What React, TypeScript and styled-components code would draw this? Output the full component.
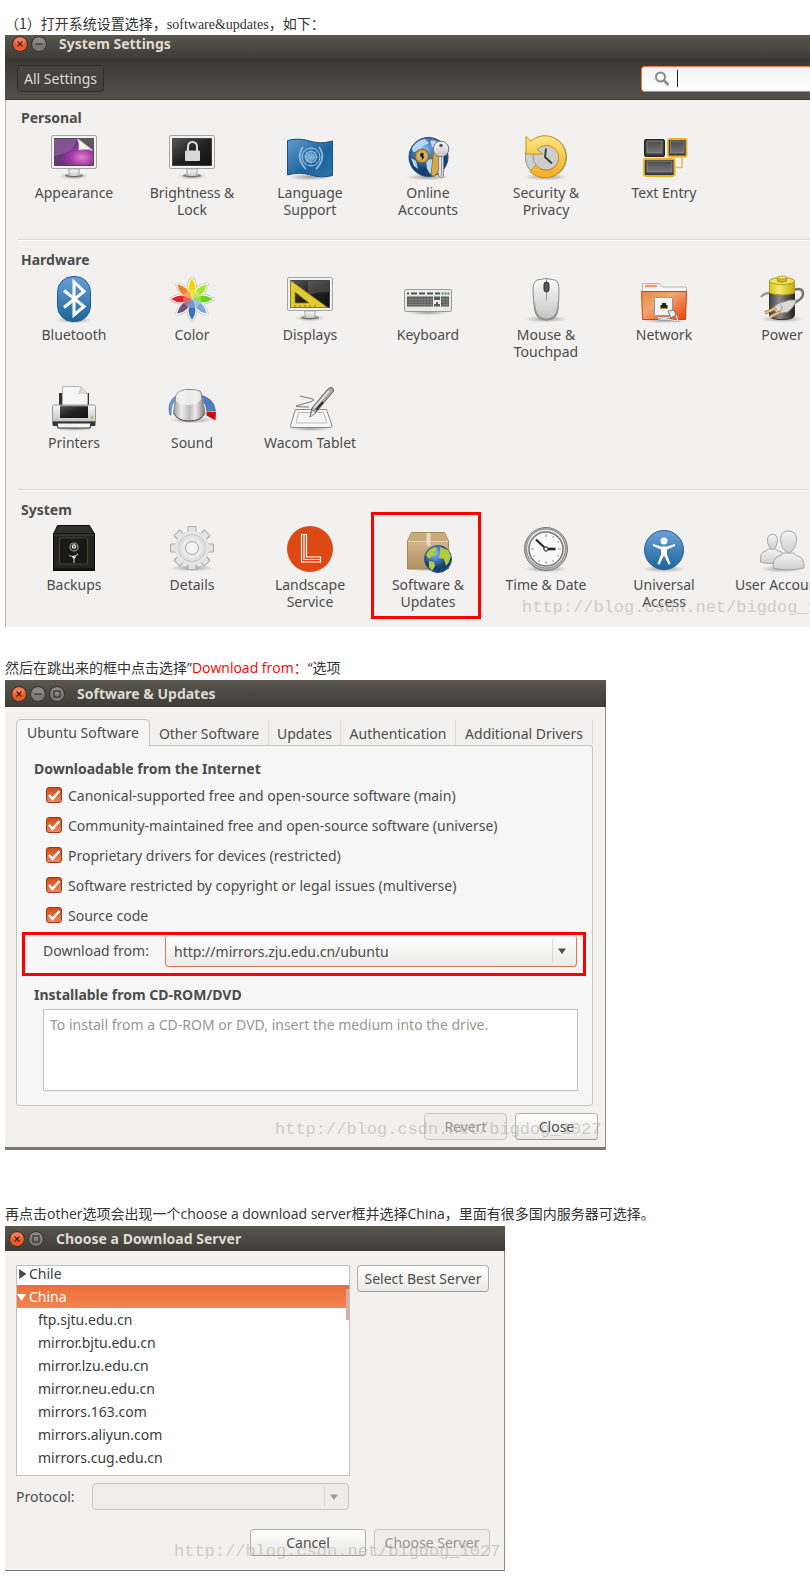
import React from "react";
import styled, { createGlobalStyle, css } from "styled-components";

const ui = `"Noto Sans", "Noto Sans CJK SC", sans-serif`;

const GlobalStyle = createGlobalStyle`
  * { box-sizing: border-box; }
  body { margin: 0; background: #fff; color: #333; overflow-x: hidden; }
  button, input, select, textarea { font: inherit; color: inherit; margin: 0; }
`;

/* ---------- article ---------- */

const Article = styled.main`
  padding: 12px 0 16px 5px;
  font-family: ${ui};
  font-size: 14px;
  line-height: 23px;
  overflow: hidden;
`;

const Paragraph = styled.p<{ $space?: number }>`
  height: 23px;
  margin: ${(p) => p.$space ?? 0}px 0 0;
  font-family: "Open Sans", "Noto Sans CJK SC", sans-serif;
  line-height: 22px;
  white-space: nowrap;
`;

const Fullwidth = styled.span`
  font-family: "Noto Sans CJK SC", sans-serif;
`;

const Serif = styled.span`
  font-family: "Liberation Serif", serif;
`;

const Red = styled.span`
  color: #f00;
`;

const Figure = styled.figure<{ $max?: number }>`
  position: relative;
  margin: 0;
  width: 100%;
  max-width: ${(p) => (p.$max ? `${p.$max}px` : "none")};
  color: #4c4c4c;
  font-size: 14px;
  line-height: 17px;
  background: #f2f1f0;
`;

const Watermark = styled.span<{ $left: number; $bottom: number }>`
  position: absolute;
  left: ${(p) => p.$left}px;
  bottom: ${(p) => p.$bottom}px;
  font-family: "Liberation Mono", monospace;
  font-size: 17px;
  line-height: 20px;
  color: rgba(170, 165, 155, 0.5);
  white-space: nowrap;
  pointer-events: none;
`;

/* ---------- window chrome ---------- */

const TitleBar = styled.header<{ $height: number; $pad: number; $bottom?: number }>`
  display: flex;
  align-items: center;
  height: ${(p) => p.$height}px;
  padding: 0 ${(p) => p.$pad}px ${(p) => p.$bottom ?? 0}px;
  background: linear-gradient(#59574e, #3d3c37);
`;

const Controls = styled.div`
  display: flex;
  gap: 3px;
`;

const Control = styled.button`
  width: 16px;
  height: 16px;
  padding: 0;
  border: 0;
  background: none;
  line-height: 0;
`;

const WindowTitle = styled.h2`
  margin: 0 0 0 12px;
  font-size: 14px;
  line-height: 17px;
  font-weight: 700;
  color: #dfdbd2;
  white-space: nowrap;
`;

type ControlKind = "close" | "minimize" | "maximize";

function WindowControl({ kind }: { kind: ControlKind }) {
  const close = kind === "close";
  return (
    <Control type="button" aria-label={kind}>
      <svg width="16" height="16" viewBox="0 0 16 16">
        <circle cx="8" cy="8" r="7.5" fill={close ? "#ef5a29" : "#7b7a74"} stroke="#33322d" />
        <ellipse cx="8" cy="5" rx="5.5" ry="3.5" fill="#fff" opacity={close ? 0.22 : 0.12} />
        {kind === "close" && <path d="M5.5 5.5l5 5M10.5 5.5l-5 5" stroke="#4a1c0c" strokeWidth="1.3" />}
        {kind === "minimize" && <path d="M4.5 8h7" stroke="#33322d" strokeWidth="1.3" />}
        {kind === "maximize" && <rect x="5" y="5" width="6" height="6" fill="none" stroke="#33322d" strokeWidth="1.2" />}
      </svg>
    </Control>
  );
}

const buttonLook = css`
  border: 1px solid #b3b1ad;
  border-bottom-color: #9c9a96;
  border-radius: 4px;
  background: linear-gradient(#fefefe, #ebeae9);
`;

const PushButton = styled.button<{ $width: number }>`
  ${buttonLook}
  width: ${(p) => p.$width}px;
  height: 27px;
  padding: 0;
  line-height: 17px;
  white-space: nowrap;
  &:disabled {
    color: #98968f;
    background: #eeedec;
    border-color: #c6c5c2;
  }
`;

/* ---------- system settings ---------- */

const SettingsToolbar = styled.div`
  display: flex;
  justify-content: space-between;
  align-items: center;
  height: 42px;
  padding-left: 12px;
  background: linear-gradient(#393732, #53514a);
  border-bottom: 1px solid #3a3934;
`;

const AllSettings = styled.button`
  height: 27px;
  padding: 0 6px;
  border: 1px solid #2f2e2a;
  border-radius: 4px;
  background: #45433d;
  color: #dfdbd2;
  line-height: 17px;
`;

const SearchBox = styled.label`
  display: flex;
  align-items: center;
  width: 169px;
  height: 26px;
  padding-left: 12px;
  border: 1px solid #f07746;
  border-right: 0;
  border-radius: 4px 0 0 4px;
  background: linear-gradient(#f4f4f4, #fff);
`;

const Caret = styled.span`
  width: 1px;
  height: 17px;
  margin-left: 7px;
  background: #222;
`;

const SearchInput = styled.input`
  flex: 1;
  min-width: 0;
  border: 0;
  outline: 0;
  background: none;
`;

const SettingsBody = styled.div`
  border-left: 1px solid #b4b2af;
  padding-left: 9px;
  overflow: hidden;
`;

const Section = styled.section`
  padding: 9px 0 20px;
  & + & {
    padding-top: 12px;
    background: linear-gradient(#dbdad8 0 1px, #fbfbfa 1px 2px, transparent 2px) no-repeat 3px 0;
  }
  &:last-child {
    padding-bottom: 16px;
  }
`;

const SectionTitle = styled.h3`
  margin: 0 0 7px 6px;
  font-size: 14px;
  line-height: 17px;
  font-weight: 700;
`;

const TileGrid = styled.div`
  display: grid;
  grid-template-columns: repeat(7, 118px);
  row-gap: 22px;
`;

const Tile = styled.button`
  position: relative;
  display: flex;
  flex-direction: column;
  align-items: center;
  gap: 3px;
  height: 86px;
  padding: 0;
  border: 0;
  background: none;
  line-height: 17px;
  white-space: pre;
`;

const TileHighlight = styled.span`
  position: absolute;
  inset: -13px 6px -8px 2px;
  border: 3px solid #f00;
`;

/* ---------- drawings ---------- */

const Defs = () => (
  <svg width="0" height="0" style={{ position: "absolute" }} aria-hidden="true">
    <defs>
      <linearGradient id="blue" x2="0" y2="1"><stop stopColor="#6a9fd8" /><stop offset="1" stopColor="#1c6796" /></linearGradient>
      <linearGradient id="flag" x2="1" y2="1"><stop stopColor="#629bd3" /><stop offset=".6" stopColor="#1d629a" /><stop offset="1" stopColor="#2c75ad" /></linearGradient>
      <radialGradient id="purple" cx=".7" cy=".7"><stop stopColor="#dc7fc9" /><stop offset=".6" stopColor="#a03aa5" /><stop offset="1" stopColor="#6d3580" /></radialGradient>
      <linearGradient id="black" x2="1" y2="1"><stop stopColor="#555" /><stop offset=".5" stopColor="#222" /><stop offset="1" stopColor="#111" /></linearGradient>
      <linearGradient id="silver" x2="0" y2="1"><stop stopColor="#fafafa" /><stop offset="1" stopColor="#c4c4c4" /></linearGradient>
      <linearGradient id="pale" x2="0" y2="1"><stop stopColor="#f4f4f4" /><stop offset="1" stopColor="#cfcfcf" /></linearGradient>
      <linearGradient id="steel" x2="1" y2="0"><stop stopColor="#999" /><stop offset=".25" stopColor="#eee" /><stop offset=".5" stopColor="#bbb" /><stop offset=".7" stopColor="#f2e6f2" /><stop offset="1" stopColor="#777" /></linearGradient>
      <linearGradient id="gold" x2="0" y2="1"><stop stopColor="#fbe583" /><stop offset="1" stopColor="#f2ae22" /></linearGradient>
      <linearGradient id="orange" x2="1" y2="1"><stop stopColor="#e58a3c" /><stop offset=".4" stopColor="#f2a472" /><stop offset="1" stopColor="#e8440b" /></linearGradient>
      <linearGradient id="key" x2="0" y2="1"><stop stopColor="#4c4c4c" /><stop offset="1" stopColor="#757575" /></linearGradient>
      <linearGradient id="tan" x2="0" y2="1"><stop stopColor="#dcc097" /><stop offset="1" stopColor="#b0905f" /></linearGradient>
      <linearGradient id="yellow" x2="1" y2="0"><stop stopColor="#d8c520" /><stop offset=".4" stopColor="#f4e96c" /><stop offset="1" stopColor="#bfa914" /></linearGradient>
      <linearGradient id="cell" x2="1" y2="0"><stop stopColor="#444" /><stop offset=".4" stopColor="#8a8a8a" /><stop offset="1" stopColor="#222" /></linearGradient>
      <radialGradient id="globe" cx=".4" cy=".3"><stop stopColor="#8ab8e6" /><stop offset=".6" stopColor="#3a72b5" /><stop offset="1" stopColor="#164071" /></radialGradient>
      <radialGradient id="shade"><stop stopOpacity=".35" /><stop offset="1" stopOpacity="0" /></radialGradient>
    </defs>
  </svg>
);

const Shadow = ({ y = 44, rx = 22 }: { y?: number; rx?: number }) => (
  <ellipse cx="24" cy={y} rx={rx} ry="3.5" fill="url(#shade)" />
);

const Monitor = ({ children, screen }: { children: React.ReactNode; screen: string }) => (
  <>
    <Shadow y={43} rx={15} />
    <path d="M18.500 36h11l-1 5 4 1.500q1 1.500-8.500 1.500t-8.500-1.500l4-1.500z" fill="url(#silver)" stroke="#888" strokeWidth=".7" />
    <path d="M15.500 42.500q8.500 2.500 17 0" fill="none" stroke="#666" />
    <rect x="1.500" y="2.500" width="45" height="33" rx="1.500" fill="#f1f1f1" stroke="#a5a5a5" />
    <rect x="4.500" y="5.500" width="39" height="27" fill={screen} stroke="#111" strokeOpacity=".6" />
    {children}
  </>
);

const petals = ["#f5d500", "#a8e62a", "#6fcf1f", "#7ba7dc", "#3c6fb5", "#75507b", "#e8242c", "#f58220"];
const gearTeeth = [0, 45, 90, 135, 180, 225, 270, 315];

const icons: Record<string, React.ReactNode> = {
  appearance: (
    <Monitor screen="url(#purple)">
      <path d="M4 6h23q-3 14-23 17z" fill="#fff" opacity=".15" />
      <path d="M28 5h16v12z" fill="#5a5a5a" />
      <path d="M27.500 5.500q2 5 1.500 11.500 8-1.500 14 .5z" fill="#f2f2f2" stroke="#ccc" strokeWidth=".5" />
    </Monitor>
  ),
  lock: (
    <Monitor screen="url(#black)">
      <path d="M20 18v-4q0-5 4.500-5t4.500 5v4" fill="none" stroke="#ddd" strokeWidth="2" />
      <rect x="17" y="17.500" width="15" height="10.500" rx="1" fill="#d8d8d8" />
    </Monitor>
  ),
  flag: (
    <>
      <Shadow />
      <path d="M1.500 7.500q11-3 22 .500t23 0v34.500q-11 3-22-.5t-23 0z" fill="url(#flag)" stroke="#155489" />
      <g fill="none" stroke="#a9cdea">
        <circle cx="25" cy="24" r="9" strokeWidth="1" /><circle cx="25" cy="24" r="5.500" strokeWidth="1.500" opacity=".7" />
        <path d="M17 14q-8 11 3 22M33 14q8 11-3 22" strokeWidth="1.800" opacity=".8" />
        <path d="M25 15v18M17 24h16M19 30l12-12M19 18l12 12" strokeWidth=".6" opacity=".6" />
      </g>
      <path d="M20 24q2-5 6-4 5 2 3 6l-4 3q-5 0-5-5z" fill="#9cc5e8" opacity=".6" />
    </>
  ),
  accounts: (
    <>
      <Shadow />
      <circle cx="24.500" cy="24" r="19.500" fill="url(#globe)" stroke="#214d7d" />
      <path d="M8 15q5-8 13-9l4 4-6 3-3 5-7 1zM26 7l8 1 5 6-5 3-6-3zM7 25l5 3 2 8-4-3zM22 27l8-1 2 8-6 7-3-5z" fill="#b6d8ef" />
      <circle cx="18" cy="23" r="7" fill="#c49a45" stroke="#7b5a1d" />
      <circle cx="18" cy="23" r="5" fill="#d8b25c" />
      <path d="M18 19.500l2 1.500-1 2 1.500 1-3 3.500.5-3-1.500-1-.5-2.500z" fill="#141414" />
      <path d="M30 14l-3 28 3 1.500 4-4 3-24z" fill="#d6a944" stroke="#8a6a22" strokeWidth=".8" />
      <path d="M24 9l5-3 8 5" fill="none" stroke="#777" />
      <circle cx="37" cy="16" r="7.800" fill="url(#silver)" stroke="#777" />
      <circle cx="37" cy="12.500" r="1.800" fill="#555" />
      <path d="M34.500 23.500h5v20l-2 1-3-1.500v-3l-1-1 1-2z" fill="#dedede" stroke="#777" strokeWidth=".8" />
      <path d="M37.500 24v19" stroke="#999" />
    </>
  ),
  security: (
    <>
      <Shadow />
      <circle cx="24" cy="24" r="16.500" fill="none" stroke="#888" strokeWidth="9" />
      <circle cx="24" cy="24" r="16.500" fill="none" stroke="#cfcfcf" strokeWidth="7.500" />
      <circle cx="24" cy="24" r="13" fill="#cdcdcd" stroke="#999" />
      <path d="M24 15.500l-1 8.500 7 6.500" fill="none" stroke="#444" strokeWidth="2" />
      <path d="M4 3.500l5 4.500a21 21 0 1 1-1 30.500l6-6.500a12.500 12.500 0 1 0 1-15.500l6 4.500h-17z" fill="url(#gold)" stroke="#cc8f12" strokeWidth="1" />
    </>
  ),
  entry: (
    <>
      <path d="M35 34.500h7v-10" fill="none" stroke="#edbe55" strokeWidth="1.600" />
      <rect x="4.500" y="6.500" width="20" height="17" rx="1.500" fill="#3a3a3a" stroke="#222" />
      <rect x="7" y="8" width="15" height="12" fill="url(#key)" stroke="#999" strokeWidth=".7" />
      <rect x="28" y="6" width="18.500" height="17.500" rx="1.500" fill="#3a3a3a" stroke="#efb01f" strokeWidth="1.800" />
      <rect x="30.500" y="8" width="13.500" height="12" fill="url(#key)" stroke="#999" strokeWidth=".7" />
      <rect x="4" y="26" width="30.500" height="17" rx="1.500" fill="#3a3a3a" stroke="#efb01f" strokeWidth="1.800" />
      <rect x="7" y="28" width="25" height="11" fill="url(#key)" stroke="#999" strokeWidth=".7" />
    </>
  ),
  bluetooth: (
    <>
      <Shadow y={45} rx={18} />
      <rect x="7.500" y="1.500" width="33" height="45" rx="15.500" fill="url(#blue)" stroke="#1d5f93" />
      <path d="M14 15.500l20 16-10 8.500v-33l10 9.500-20 16" fill="none" stroke="#fff" strokeWidth="3" />
    </>
  ),
  color: (
    <>
      <g fill="#fff" stroke="#c4c4c4" strokeWidth="3.500" strokeLinejoin="round">
        {petals.map((c, i) => <path key={c} d="M24 24q-7-11 0-21 7 10 0 21z" transform={`rotate(${i * 45} 24 24)`} />)}
      </g>
      <g stroke="#fff" strokeWidth="2">
        {petals.map((c, i) => <path key={c} d="M24 24q-7-11 0-21 7 10 0 21z" fill="#fff" transform={`rotate(${i * 45} 24 24)`} />)}
      </g>
      {petals.map((c, i) => <path key={c} d="M24 24q-7-11 0-21 7 10 0 21z" fill={c} transform={`rotate(${i * 45} 24 24)`} />)}
      <circle cx="24" cy="24" r="9" fill="#fff" opacity=".28" />
    </>
  ),
  displays: (
    <Monitor screen="url(#black)">
      <path d="M22 6h21v11q-15 0-21 4z" fill="#fff" opacity=".15" />
      <path d="M4.500 5.500l37 27h-37zM9 17v11h14z" fill="#e3cc33" stroke="#8c7b08" strokeWidth=".7" fillRule="evenodd" />
      <path d="M9 32v-2M14 32v-2M19 32v-2M24 32v-2M29 32v-2" stroke="#8c7b08" />
    </Monitor>
  ),
  keyboard: (
    <>
      <Shadow y={37} />
      <rect x=".5" y="14.500" width="47" height="22" rx="1.500" fill="#e9e9e7" stroke="#9a9a98" />
      <path d="M3 18.500h2M7 18.500h6M15 18.500h6M23 18.500h6M31 18.500h5" stroke="#555" strokeWidth="2" />
      <path d="M37.500 18.500h2M40.500 18.500h2M43.500 18.500h2" stroke="#4a9a3a" strokeWidth="2" />
      <path d="M3 21.500h26v10h-26zM37 21.500h8v10h-8zM30 21.500h6v3.500h-6zM30 29h6v2.500h-6zM32 27h2v2h-2z" fill="#5a5a5a" />
      <path d="M3 24.500h26M3 27h26M3 29.500h26M37 24.500h8M37 27h8M37 29.500h8" stroke="#999" strokeWidth=".5" />
      <path d="M6 21v11M9 21v11M12 21v11M15 21v11M18 21v11M21 21v11M24 21v11M27 21v11M40 21v11M43 21v11" stroke="#999" strokeWidth=".5" />
    </>
  ),
  mouse: (
    <>
      <Shadow />
      <path d="M15 5q9-3 18 0 4 2 4 10t-1 19q-1 11-11.500 11t-12-11q-1.500-11-1.500-19t4-10z" fill="url(#silver)" stroke="#8b8b8b" />
      <path d="M13.500 27q-1 15 11 16.500 12-1.500 11-16.500 4 17-11 18.500-15-1.500-11-18.500z" fill="#888" opacity=".7" />
      <path d="M24.500 3.500v22" stroke="#9a9a9a" />
      <rect x="22" y="7" width="5" height="10" rx="2.500" fill="#555" stroke="#333" />
    </>
  ),
  network: (
    <>
      <Shadow y={45} />
      <path d="M2.500 18v-9.500h17l3 3.500h24v6z" fill="#f5f5f5" stroke="#b5b5b5" />
      <path d="M5 11h12" stroke="#f29b66" strokeWidth="2.500" />
      <path d="M1.500 16.500h45l-1 28h-43z" fill="url(#orange)" stroke="#c9470f" />
      <rect x="14.500" y="22.500" width="18" height="18" rx="1" fill="#f2f2f2" stroke="#999" />
      <path d="M20.500 34v-4h1.500v-2h4v2h1.500v4z" fill="#222" />
      <path d="M21 33.500h6" stroke="#b59b32" />
      <path d="M34 40q-8 5-15 2-3 3 7 2l12 2-2-6" fill="none" stroke="#777" strokeWidth="2" />
      <path d="M34 40q-8 5-15 2-3 3 7 2l12 2-2-6" fill="none" stroke="#eee" strokeWidth="1.200" />
      <path d="M28 36l6-1 2 5-5 3z" fill="#ededed" stroke="#777" />
    </>
  ),
  power: (
    <>
      <Shadow />
      <path d="M12 18q-6 0-9 4" fill="none" stroke="#999" strokeWidth="2.500" />
      <path d="M36 15q9-3 9 4 0 5-9 9" fill="none" stroke="#777" strokeWidth="2.500" />
      <path d="M11.500 6v34q0 4.500 12.500 4.500t12.500-4.500v-34z" fill="url(#cell)" stroke="#333" />
      <path d="M11.500 6v12q12.500 4 25 0v-12z" fill="url(#yellow)" stroke="#b29d10" />
      <ellipse cx="24" cy="6" rx="12.500" ry="3.500" fill="#efe36a" stroke="#b29d10" />
      <path d="M19.500 2v4q4.500 2.500 9 0v-4z" fill="#d3bd20" stroke="#a38e0c" />
      <ellipse cx="24" cy="2.500" rx="4.500" ry="1.500" fill="#f2e87b" stroke="#a38e0c" strokeWidth=".7" />
      <path d="M14 33l7-5 11-3 7 0-4 7-5 5-10 2z" fill="#d9d9d5" stroke="#888" />
      <path d="M21 28l3 4-2 6" fill="none" stroke="#999" strokeWidth=".8" />
      <path d="M7 38l11-5M12 42l10-5" stroke="#8b6436" strokeWidth="3.500" /><path d="M7 38l11-5M12 42l10-5" stroke="#e9c083" strokeWidth="2" />
    </>
  ),
  printer: (
    <>
      <Shadow y={45} />
      <path d="M9 10h4v14h-4zM35 10h4v14h-4z" fill="#333" />
      <path d="M12.500 3.500h18l7 7v15h-25z" fill="#f6f6f6" stroke="#b5b5b5" />
      <path d="M30.500 3.500q0 5-2 7 4-1 8.500 0" fill="#ddd" stroke="#b5b5b5" strokeWidth=".7" />
      <path d="M2.500 23.500q0-1.500 2-1.500h39q2 0 2 1.500v15h-43z" fill="url(#silver)" stroke="#999" />
      <path d="M10 23h28v12h-28z" fill="url(#black)" /><path d="M10 23h28" stroke="#777" />
      <path d="M2.500 38.500h43v3q0 1.500-2 1.500h-39q-2 0-2-1.500z" fill="#333" />
      <path d="M7 40h34l-1 5h-32z" fill="#f5f5f5" stroke="#333" />
      <circle cx="42" cy="34.500" r="1.300" fill="#8ccf4c" />
    </>
  ),
  sound: (
    <>
      <Shadow y={37} />
      <path d="M2 32q-4-13 7-20l2 2q-9 6-8 18z" fill="#6f9bcf" stroke="#3f70ab" strokeWidth=".7" />
      <path d="M32 12q14 3 15.500 16l-9-.5q0-7-6-11z" fill="#4c80bd" stroke="#3465a4" strokeWidth=".7" />
      <path d="M38.500 28.500l9.500.5-.5 8.500-9-5z" fill="#d00808" />
      <path d="M8 13q1-6 12-6.500 11 0 13 2.500l4 20q-2 9-16 9.500-12-.5-15.500-9z" fill="url(#steel)" stroke="#888" />
      <path d="M8 13q1-5.500 12-6 10 0 12.500 2.500l.5 7q-4 5-12.500 5.500-9 0-12.500-4z" fill="#f2f2f2" opacity=".85" />
      <path d="M5.500 30q4 8 15.500 8t16-8" fill="none" stroke="#555" />
    </>
  ),
  tablet: (
    <>
      <Shadow y={45} />
      <path d="M9.500 26.500h31l5.500 16q0 2-2 2h-38q-2 0-1.500-2z" fill="#f8f8f8" stroke="#888" />
      <path d="M12.500 29.500h25l3.500 10.500h-31z" fill="#f3f3f3" stroke="#bbb" />
      <path d="M14 13l13 3q3 2-7 4l-10 3q0 1 13 1" fill="none" stroke="#777" />
      <path d="M24 34l2-9 16-19q3-3 5-.5t-1 4.500l-15 18z" fill="#a9a9a9" stroke="#5c5c5c" />
      <path d="M28 25l15-17" stroke="#eee" strokeWidth="1.500" /><path d="M30 27l7-8" stroke="#333" strokeWidth="2" />
      <path d="M24 34l2-7 4 3z" fill="#e5e5e5" stroke="#777" strokeWidth=".7" />
    </>
  ),
  safe: (
    <>
      <path d="M3.500 9l4-8.500h32l5 8.500z" fill="#30302e" stroke="#111" />
      <path d="M3.500 9h41v35h-41z" fill="#23231f" stroke="#080808" />
      <path d="M3 44h42v2h-42z" fill="#0e0e0e" /><path d="M4 10h40" stroke="#50504a" />
      <rect x="9.500" y="13" width="28" height="26" rx="1" fill="#181815" stroke="#45453d" strokeWidth="1.200" />
      <circle cx="24" cy="22" r="4" fill="#222" stroke="#999" strokeWidth="1.200" /><circle cx="24" cy="21.500" r="2.200" fill="#f4f4f4" /><circle cx="24" cy="21.500" r="1" fill="#333" />
      <path d="M24 32v6M24 32l-5-1.500M24 32l4-3" stroke="#aaa" strokeWidth="1.300" /><circle cx="24" cy="32" r="1.600" fill="#fff" />
    </>
  ),
  gear: (
    <>
      <Shadow y={43} />
      {gearTeeth.map((a) => <path key={a} d="M18.500 9l1.500-3v-4.500h8v4.500l1.500 3z" fill="#e4e4e4" stroke="#a9a9a9" transform={`rotate(${a} 24 23)`} />)}
      <circle cx="24" cy="23" r="17" fill="#e6e6e6" />
      <circle cx="24" cy="23" r="13.500" fill="#e0e0e0" stroke="#c6c6c6" />
      <circle cx="24" cy="23" r="9" fill="none" stroke="#ebebeb" strokeWidth="3" />
      <circle cx="24" cy="23" r="6.500" fill="#f4f3f2" stroke="#aaa" />
    </>
  ),
  landscape: (
    <>
      <circle cx="24" cy="24" r="23" fill="#dd4814" />
      <path d="M15.500 9v28h19.500" fill="none" stroke="#fff" strokeWidth="1.200" />
      <path d="M18 9v25.500h16" fill="none" stroke="#fff" strokeWidth="1.200" />
      <path d="M20.500 9v23h14v5.500M15 9.500h6" fill="none" stroke="#fff" strokeWidth="1.200" />
    </>
  ),
  software: (
    <>
      <Shadow y={43} />
      <path d="M3.500 16l4-8.500h33l4 8.500v28h-41z" fill="url(#tan)" stroke="#a9895a" />
      <path d="M4 16l4-8h32l4 8z" fill="#c9aa79" />
      <path d="M4 16.500h40" stroke="#e8d3af" />
      <path d="M22.500 8h4v13h-4z" fill="#eadcc0" />
      <circle cx="34" cy="34" r="13.500" fill="url(#globe)" stroke="#25538f" />
      <path d="M22 30q3-7 10-8l1 3-3 2 1 3-4 2-2 2zM36 22l8 3 3 6-2 6-3 4-2-7-5-1 1-5zM25 36l5 1 1 4-3 5-3-4z" fill="#b2cc3c" />
    </>
  ),
  clock: (
    <>
      <Shadow />
      <circle cx="24" cy="24" r="21.500" fill="#b5b5b5" stroke="#777" />
      <circle cx="24" cy="23.500" r="19.500" fill="#e9e9e9" stroke="#8b8b8b" />
      <circle cx="24" cy="24" r="17" fill="#f8f8f8" stroke="#777" strokeWidth="1.500" />
      <path d="M24 9v3M24 36v3M9 24h3M36 24h3M31.500 11l-1 2M37 16.500l-2 1M16.500 37l1-2M31.500 37l-1-2M37 31.500l-2-1M11 31.500l2-1" stroke="#999" />
      <path d="M24 24l-10-9.500" stroke="#222" strokeWidth="2" /><path d="M24 24h9.500" stroke="#222" strokeWidth="2.500" />
      <circle cx="24" cy="24" r="2.200" fill="#ddd" stroke="#222" />
    </>
  ),
  universal: (
    <>
      <Shadow y={44} />
      <circle cx="24" cy="25" r="19.500" fill="url(#blue)" stroke="#235f99" />
      <circle cx="24" cy="16" r="3.500" fill="#fff" />
      <path d="M13 19l8 2.500h6l8-2.500v2l-8 3.500v5l3.500 9.500-2 .5-4.500-9-4.500 9-2-.5 3.500-9.500v-5l-8-3.500z" fill="#fff" />
    </>
  ),
  users: (
    <>
      <Shadow y={44} />
      <g fill="url(#pale)" stroke="#a5a5a5">
        <path d="M10 24q-1 2-5 3-3 2-2.500 10 8 3 24 0 0-8-3-10-5-1-5-3z" />
        <path d="M9.500 15q0-5.500 5-5.500t5 5.500q-.5 7.500-5 9.500-4.500-2-5-9.500z" />
        <path d="M25 28q0 2-6 4-4 2-4 11 15 3.500 31 0 0-9-4-11-6-2-6-4z" />
        <path d="M22.500 14.500q0-8.500 8-8.500t8 8.500q-1 11-8 13.500-7-2.500-8-13.500z" />
      </g>
    </>
  ),
};

interface Item { icon: string; label: string; marked?: boolean }

const sections: { title: string; items: Item[] }[] = [
  {
    title: "Personal",
    items: [
      { icon: "appearance", label: "Appearance" },
      { icon: "lock", label: "Brightness &\nLock" },
      { icon: "flag", label: "Language\nSupport" },
      { icon: "accounts", label: "Online\nAccounts" },
      { icon: "security", label: "Security &\nPrivacy" },
      { icon: "entry", label: "Text Entry" },
    ],
  },
  {
    title: "Hardware",
    items: [
      { icon: "bluetooth", label: "Bluetooth" },
      { icon: "color", label: "Color" },
      { icon: "displays", label: "Displays" },
      { icon: "keyboard", label: "Keyboard" },
      { icon: "mouse", label: "Mouse &\nTouchpad" },
      { icon: "network", label: "Network" },
      { icon: "power", label: "Power" },
      { icon: "printer", label: "Printers" },
      { icon: "sound", label: "Sound" },
      { icon: "tablet", label: "Wacom Tablet" },
    ],
  },
  {
    title: "System",
    items: [
      { icon: "safe", label: "Backups" },
      { icon: "gear", label: "Details" },
      { icon: "landscape", label: "Landscape\nService" },
      { icon: "software", label: "Software &\nUpdates", marked: true },
      { icon: "clock", label: "Time & Date" },
      { icon: "universal", label: "Universal\nAccess" },
      { icon: "users", label: "User Accounts" },
    ],
  },
];

function SystemSettings() {
  return (
    <Figure>
      <TitleBar $height={23} $pad={7} $bottom={6}>
        <Controls>
          <WindowControl kind="close" />
          <WindowControl kind="minimize" />
        </Controls>
        <WindowTitle>System Settings</WindowTitle>
      </TitleBar>
      <SettingsToolbar>
        <AllSettings type="button">All Settings</AllSettings>
        <SearchBox>
          <svg width="16" height="16" viewBox="0 0 16 16" fill="none" stroke="#8a8a8a">
            <circle cx="6.500" cy="6" r="4.500" strokeWidth="2" />
            <path d="M10 9.500l4.500 4.500" strokeWidth="2.500" />
          </svg>
          <Caret />
          <SearchInput type="text" aria-label="Search settings" />
        </SearchBox>
      </SettingsToolbar>
      <SettingsBody>
        {sections.map((s) => (
          <Section key={s.title}>
            <SectionTitle>{s.title}</SectionTitle>
            <TileGrid>
              {s.items.map((it) => (
                <Tile key={it.label} type="button">
                  <svg width="48" height="48" viewBox="0 0 48 48" aria-hidden="true">{icons[it.icon]}</svg>
                  <span>{it.label}</span>
                  {it.marked && <TileHighlight />}
                </Tile>
              ))}
            </TileGrid>
          </Section>
        ))}
      </SettingsBody>
      <Watermark $left={517} $bottom={9}>http://blog.csdn.net/bigdog_1027</Watermark>
    </Figure>
  );
}

/* ---------- software & updates ---------- */

const UpdatesBody = styled.div`
  padding: 12px 7px 7px 11px;
  border-right: 1px solid #8e8c89;
  border-bottom: 3px solid #7a7672;
`;

const TabList = styled.div`
  display: flex;
  align-items: flex-end;
`;

const Tab = styled.button<{ $width: number; $active?: boolean }>`
  flex: 0 1 ${(p) => p.$width}px;
  min-width: 0;
  height: 25px;
  padding: 2px 0 0;
  border: 0;
  border-right: 1px solid #dddcda;
  background: none;
  line-height: 17px;
  white-space: nowrap;
  ${(p) =>
    p.$active &&
    css`
      height: 27px;
      padding: 0 0 2px;
      margin-bottom: -1px;
      border: 1px solid #c5c3c0;
      border-bottom: 0;
      border-radius: 5px 5px 0 0;
      background: #f6f6f6;
      z-index: 1;
    `}
`;

const TabPanel = styled.div`
  margin-right: 5px;
  padding: 14px 6px 14px 5px;
  border: 1px solid #c5c3c0;
  border-radius: 0 3px 3px 3px;
  background: #f6f6f6;
`;

const GroupTitle = styled.h3`
  margin: 0 0 3px 12px;
  font-size: 14px;
  line-height: 17px;
  font-weight: 700;
`;

const CheckRow = styled.label`
  display: flex;
  align-items: center;
  gap: 6px;
  height: 30px;
  margin-left: 24px;
  white-space: nowrap;
`;

const CheckMark = styled.span`
  display: grid;
  width: 16px;
  height: 16px;
  & > * {
    grid-area: 1 / 1;
  }
`;

const CheckInput = styled.input`
  appearance: none;
  width: 16px;
  height: 16px;
  border: 1px solid #9a3a12;
  border-radius: 3px;
  background: linear-gradient(#cf4d18, #e98a63);
`;

const DownloadRow = styled.div`
  display: flex;
  align-items: flex-start;
  justify-content: space-between;
  height: 44px;
  margin: 2px 0 10px;
  padding: 0 6px 0 18px;
  border: 3px solid #f00;
`;

const FieldLabel = styled.label`
  line-height: 32px;
`;

const SelectWrap = styled.span<{ $width: number }>`
  position: relative;
  width: ${(p) => p.$width}px;
  flex: 0 1 auto;
`;

const SelectBox = styled.select<{ $height: number; $focus?: boolean }>`
  ${buttonLook}
  display: block;
  appearance: none;
  width: 100%;
  height: ${(p) => p.$height}px;
  padding: 0 32px 0 8px;
  ${(p) => p.$focus && css`border-color: #dd7a55; border-top-color: #eee;`}
  &:disabled {
    opacity: 1;
    background: #eeedec;
    border-color: #c6c5c2;
  }
`;

const SelectArrow = styled.span`
  position: absolute;
  inset: 4px 1px 4px auto;
  display: flex;
  align-items: center;
  width: 24px;
  padding-left: 5px;
  border-left: 1px solid #d8d7d5;
  pointer-events: none;
`;

function Select({ id, width, height, value, disabled, focus }: {
  id: string; width: number; height: number; value: string; disabled?: boolean; focus?: boolean;
}) {
  return (
    <SelectWrap $width={width}>
      <SelectBox id={id} $height={height} $focus={focus} disabled={disabled} defaultValue={value}>
        <option value={value}>{value}</option>
      </SelectBox>
      <SelectArrow>
        <svg width="8" height="6" viewBox="0 0 8 6"><path d="M0 .5h8L4 6z" fill={disabled ? "#999" : "#4c4c4c"} /></svg>
      </SelectArrow>
    </SelectWrap>
  );
}

const MediumBox = styled.textarea`
  display: block;
  width: calc(100% - 29px);
  height: 82px;
  margin: 6px 0 0 21px;
  padding: 6px;
  border: 1px solid #c2c0bd;
  outline: 0;
  resize: none;
  background: #fff;
  line-height: 17px;
  &::placeholder {
    color: #98968f;
    opacity: 1;
  }
`;

const Actions = styled.div<{ $top: number }>`
  display: flex;
  justify-content: flex-end;
  gap: 8px;
  margin-top: ${(p) => p.$top}px;
`;

const sources = [
  "Canonical-supported free and open-source software (main)",
  "Community-maintained free and open-source software (universe)",
  "Proprietary drivers for devices (restricted)",
  "Software restricted by copyright or legal issues (multiverse)",
  "Source code",
];

const tabs: [string, number][] = [
  ["Ubuntu Software", 134],
  ["Other Software", 119],
  ["Updates", 72],
  ["Authentication", 115],
  ["Additional Drivers", 137],
];

function SoftwareUpdates() {
  return (
    <Figure $max={601}>
      <TitleBar $height={27} $pad={6}>
        <Controls>
          <WindowControl kind="close" />
          <WindowControl kind="minimize" />
          <WindowControl kind="maximize" />
        </Controls>
        <WindowTitle>Software &amp; Updates</WindowTitle>
      </TitleBar>
      <UpdatesBody>
        <TabList role="tablist">
          {tabs.map(([name, width], i) => (
            <Tab key={name} type="button" role="tab" aria-selected={i === 0} $width={width} $active={i === 0}>
              {name}
            </Tab>
          ))}
        </TabList>
        <TabPanel role="tabpanel">
          <GroupTitle>Downloadable from the Internet</GroupTitle>
          {sources.map((s) => (
            <CheckRow key={s}>
              <CheckMark>
                <CheckInput type="checkbox" defaultChecked />
                <svg width="16" height="16" viewBox="0 0 16 16" fill="none" pointerEvents="none">
                  <path d="M3 8l3.500 4L13.500 4" stroke="#fff" strokeWidth="2.400" />
                </svg>
              </CheckMark>
              <span>{s}</span>
            </CheckRow>
          ))}
          <DownloadRow>
            <FieldLabel htmlFor="mirror">Download from:</FieldLabel>
            <Select id="mirror" width={412} height={32} value="http://mirrors.zju.edu.cn/ubuntu" focus />
          </DownloadRow>
          <GroupTitle>Installable from CD-ROM/DVD</GroupTitle>
          <MediumBox
            aria-label="Installable from CD-ROM/DVD"
            placeholder="To install from a CD-ROM or DVD, insert the medium into the drive."
          />
        </TabPanel>
        <Actions $top={7}>
          <PushButton type="button" $width={83} disabled>Revert</PushButton>
          <PushButton type="button" $width={83}>Close</PushButton>
        </Actions>
      </UpdatesBody>
      <Watermark $left={270} $bottom={10}>http://blog.csdn.net/bigdog_1027</Watermark>
    </Figure>
  );
}

/* ---------- choose a download server ---------- */

const ServerBody = styled.div`
  padding: 14px 14px 14px 11px;
  border-right: 1px solid #8e8c89;
  border-bottom: 1px solid #777;
`;

const ServerColumns = styled.div`
  display: flex;
  align-items: flex-start;
  gap: 7px;
`;

const ServerList = styled.ul`
  position: relative;
  flex: 0 1 334px;
  height: 211px;
  margin: 0;
  padding: 0;
  border: 1px solid #c2c0bd;
  overflow: hidden;
  list-style: none;
  background: #fff;
  color: #3c3c3c;
`;

const ServerItem = styled.li<{ $child?: boolean; $selected?: boolean }>`
  display: flex;
  align-items: center;
  gap: 2px;
  height: 23px;
  padding-left: ${(p) => (p.$child ? 21 : 0)}px;
  &:first-child {
    margin-top: -4px;
  }
  ${(p) => p.$selected && css`color: #fff; background: linear-gradient(#ea6d38, #f68351);`}
`;

const ScrollThumb = styled.li`
  position: absolute;
  top: 23px;
  right: 0;
  width: 3px;
  height: 31px;
  background: #d9ab98;
`;

const ProtocolRow = styled.div`
  display: flex;
  align-items: center;
  justify-content: space-between;
  max-width: 333px;
  height: 27px;
  margin-top: 7px;
`;

const servers = [
  "ftp.sjtu.edu.cn",
  "mirror.bjtu.edu.cn",
  "mirror.lzu.edu.cn",
  "mirror.neu.edu.cn",
  "mirrors.163.com",
  "mirrors.aliyun.com",
  "mirrors.cug.edu.cn",
];

function ChooseServer() {
  return (
    <Figure $max={500}>
      <TitleBar $height={25} $pad={4}>
        <Controls>
          <WindowControl kind="close" />
          <WindowControl kind="maximize" />
        </Controls>
        <WindowTitle>Choose a Download Server</WindowTitle>
      </TitleBar>
      <ServerBody>
        <ServerColumns>
          <ServerList>
            <ServerItem>
              <svg width="10" height="10" viewBox="0 0 10 10"><path d="M2.500 .5v9l6.500-4.500z" fill="#4c4c4c" stroke="#333" strokeWidth=".5" /></svg>
              Chile
            </ServerItem>
            <ServerItem $selected>
              <svg width="10" height="10" viewBox="0 0 10 10"><path d="M0 2h9L4.500 9z" fill="#fff" /></svg>
              China
            </ServerItem>
            {servers.map((s) => <ServerItem key={s} $child>{s}</ServerItem>)}
            <ScrollThumb aria-hidden="true" />
          </ServerList>
          <PushButton type="button" $width={132}>Select Best Server</PushButton>
        </ServerColumns>
        <ProtocolRow>
          <label htmlFor="protocol">Protocol:</label>
          <Select id="protocol" width={257} height={27} value="" disabled />
        </ProtocolRow>
        <Actions $top={19}>
          <PushButton type="button" $width={116}>Cancel</PushButton>
          <PushButton type="button" $width={116} disabled>Choose Server</PushButton>
        </Actions>
      </ServerBody>
      <Watermark $left={169} $bottom={9}>http://blog.csdn.net/bigdog_1027</Watermark>
    </Figure>
  );
}

export default function App() {
  return (
    <>
      <GlobalStyle />
      <Defs />
      <Article>
        <Paragraph>
          <Fullwidth>（1）打开系统设置选择，</Fullwidth>
          <Serif>software&amp;updates</Serif>
          <Fullwidth>，如下：</Fullwidth>
        </Paragraph>
        <SystemSettings />
        <Paragraph $space={30}>
          然后在跳出来的框中点击选择”<Red>Download from：</Red>“选项
        </Paragraph>
        <SoftwareUpdates />
        <Paragraph $space={53}>
          再点击other选项会出现一个choose a download server框并选择China，里面有很多国内服务器可选择。
        </Paragraph>
        <ChooseServer />
      </Article>
    </>
  );
}
